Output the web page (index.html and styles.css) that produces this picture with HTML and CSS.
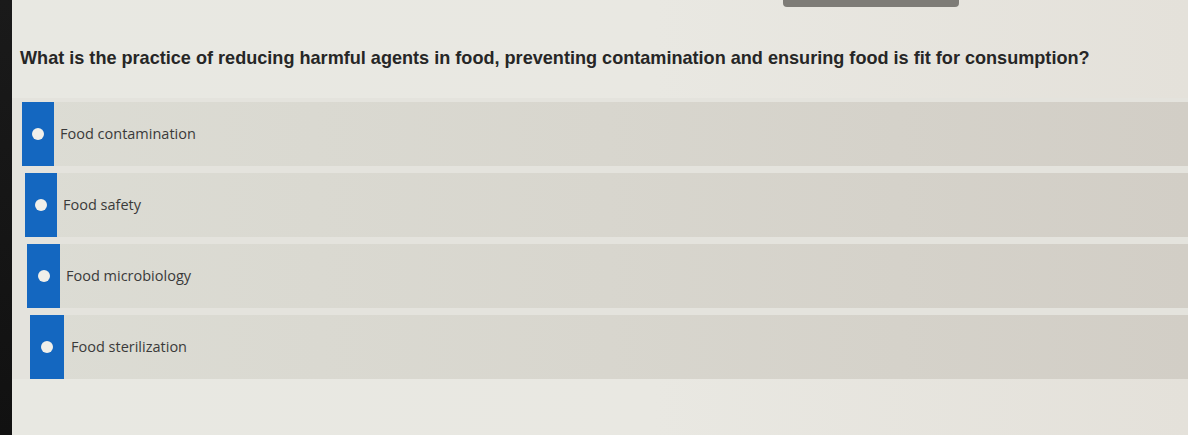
FILE: index.html
```html
<!DOCTYPE html>
<html lang="en">
<head>
<meta charset="utf-8">
<title>Quiz question</title>
<link rel="stylesheet" href="styles.css">
</head>
<body>
<div class="screen">
  <div class="bezel"></div>
  <main class="content">
    <div class="topbar"><div class="tab"></div></div>
    <h1 class="question">What is the practice of reducing harmful agents in food, preventing contamination and ensuring food is fit for consumption?</h1>
    <ul class="options">
      <li class="option o1"><span class="mark"><span class="dot"></span></span><span class="label">Food contamination</span></li>
      <li class="option o2"><span class="mark"><span class="dot"></span></span><span class="label">Food safety</span></li>
      <li class="option o3"><span class="mark"><span class="dot"></span></span><span class="label">Food microbiology</span></li>
      <li class="option o4"><span class="mark"><span class="dot"></span></span><span class="label">Food sterilization</span></li>
    </ul>
  </main>
</div>
</body>
</html>
```
FILE: styles.css
```css
html, body {
  margin: 0;
  padding: 0;
  width: 1188px;
  height: 435px;
  overflow: hidden;
}

.screen {
  display: flex;
  width: 1188px;
  height: 435px;
  background: linear-gradient(90deg, #e8e8e2 0%, #e9e8e2 55%, #e4e1da 100%);
}

.bezel {
  width: 12px;
  flex: none;
  background: linear-gradient(180deg, #1a1a1a 0%, #111 100%);
}

.content {
  flex: 1;
  display: flex;
  flex-direction: column;
}

.topbar {
  height: 8px;
  display: flex;
  padding-left: 771px;
}

.tab {
  width: 176px;
  height: 7px;
  background: #7e7c77;
  border-radius: 0 0 4px 4px;
}

.question {
  margin: 38px 0 0 8px;
  font-family: "Liberation Sans", Arial, sans-serif;
  font-weight: bold;
  font-size: 18.1px;
  letter-spacing: 0;
  color: #262626;
  line-height: 24px;
}

.options {
  list-style: none;
  margin: 28px 0 0 0;
  padding: 4px 0 0 0;
  display: flex;
  flex-direction: column;
  gap: 7px;
  background: #e4e3dd;
}

.option {
  display: flex;
  align-items: center;
  height: 64px;
  background: linear-gradient(90deg, #dcdcd4 0%, #d8d6ce 50%, #d2cec6 100%);
}

.mark {
  width: 32px;
  height: 100%;
  flex: none;
  background: #1467c0;
  display: flex;
  align-items: center;
  justify-content: center;
}

.dot {
  width: 12px;
  height: 12px;
  border-radius: 50%;
  background: #f1f0ea;
}

.label {
  font-family: "Open Sans", sans-serif;
  font-size: 14.5px;
  color: #3a3a3a;
  margin-left: 6px;
  margin-top: -2px;
}

.o1 { margin-left: 10px; }
.o2 { margin-left: 13px; }
.o3 { margin-left: 15px; }
.o3 .mark { width: 33px; }
.o4 { margin-left: 18px; }
.o4 .mark { width: 34px; }
.o4 .label { margin-left: 7px; }
```
